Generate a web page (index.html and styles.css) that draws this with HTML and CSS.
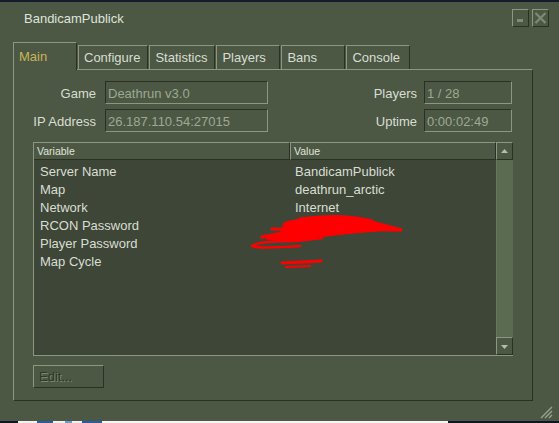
FILE: index.html
```html
<!DOCTYPE html>
<html>
<head>
<meta charset="utf-8">
<link rel="stylesheet" href="styles.css">
</head>
<body>
<div class="desk-top"></div>
<div class="window">
  <div class="titlebar">
    <span class="title">BandicamPublick</span>
    <div class="winbtns">
      <div class="winbtn"><svg width="15" height="16" viewBox="0 0 15 16"><rect x="4" y="9" width="6" height="3" fill="#7f8a76"/></svg></div>
      <div class="winbtn"><svg width="15" height="16" viewBox="0 0 15 16"><path d="M2.5 3 L12.5 13 M12.5 3 L2.5 13" stroke="#7f8a76" stroke-width="2.2"/></svg></div>
    </div>
  </div>
  <div class="tabs">
    <div class="tab active">Main</div>
    <div class="tab">Configure</div>
    <div class="tab">Statistics</div>
    <div class="tab">Players</div>
    <div class="tab">Bans</div>
    <div class="tab">Console</div>
  </div>
  <div class="panel">
    <div class="form">
      <div class="lbl">Game</div><div class="field">Deathrun v3.0</div>
      <div class="lbl lbl-r">Players</div><div class="field">1 / 28</div>
      <div class="lbl">IP Address</div><div class="field">26.187.110.54:27015</div>
      <div class="lbl lbl-r">Uptime</div><div class="field">0:00:02:49</div>
    </div>
    <div class="list">
      <div class="list-main">
        <div class="header">
          <div class="hcell c1">Variable</div>
          <div class="hcell c2">Value</div>
        </div>
        <div class="rows">
          <div class="row"><span class="c1">Server Name</span><span class="c2">BandicamPublick</span></div>
          <div class="row"><span class="c1">Map</span><span class="c2">deathrun_arctic</span></div>
          <div class="row"><span class="c1">Network</span><span class="c2">Internet</span></div>
          <div class="row"><span class="c1">RCON Password</span><span class="c2"></span></div>
          <div class="row"><span class="c1">Player Password</span><span class="c2"></span></div>
          <div class="row"><span class="c1">Map Cycle</span><span class="c2"></span></div>
        </div>
        <svg class="scribble" width="461" height="213" viewBox="0 0 461 213">
          <g transform="translate(-34,-142)" fill="none" stroke="#ff0000" stroke-linecap="round" stroke-linejoin="round">
            <path d="M284,223 C300,216 340,217 372,221 L402,229 L352,233 L318,237 L290,241 L266,239 L282,231 Z" fill="#ff0000" stroke-width="1"/>
            <path d="M300,219 Q340,213 372,221" stroke-width="3"/>
            <path d="M272,229 L401,230" stroke-width="3"/>
            <path d="M262,237 Q300,229 352,232" stroke-width="3.5"/>
            <path d="M322,238 L296,241 Q258,241 252,246 Q256,249 300,246" stroke-width="2.4"/>
            <path d="M282,263 L321,261" stroke-width="3"/>
            <path d="M286,267 L310,266" stroke-width="2.2"/>
          </g>
        </svg>
      </div>
      <div class="scrollbar">
        <div class="sb-btn"><svg width="15" height="16" viewBox="0 0 15 16"><path d="M4 10 L11 10 L7.5 6 Z" fill="#b4bcab"/></svg></div>
        <div class="sb-track"></div>
        <div class="sb-btn"><svg width="15" height="16" viewBox="0 0 15 16"><path d="M4 7 L11 7 L7.5 11 Z" fill="#b4bcab"/></svg></div>
      </div>
    </div>
    <div class="btn-edit">Edit...</div>
  </div>
  <div class="footer">
    <svg class="grip" width="13" height="13" viewBox="0 0 13 13">
      <path d="M1 12 L12 1 M5 12 L12 5 M9 12 L12 9" stroke="#9aa391" stroke-width="1.4"/>
    </svg>
  </div>
</div>
<div class="desk-bottom"></div>
</body>
</html>
```
FILE: styles.css
```css
html, body {
  margin: 0;
  padding: 0;
  background: #101827;
}
body {
  width: 559px;
  height: 423px;
  overflow: hidden;
  font-family: "Liberation Sans", Arial, sans-serif;
  font-size: 13px;
  color: #d8ded3;
}
.desk-top {
  height: 2px;
  background: #141c2b;
}
.window {
  height: 419px;
  background: #4c5844;
  display: flex;
  flex-direction: column;
}
.titlebar {
  height: 41px;
  box-sizing: border-box;
  padding: 7px 10px 0 24px;
  display: flex;
  align-items: flex-start;
  justify-content: space-between;
}
.title {
  line-height: 20px;
  color: #dfe4da;
}
.winbtns {
  display: flex;
  gap: 3px;
}
.winbtn {
  width: 17px;
  height: 18px;
  box-sizing: border-box;
  border-top: 1px solid #8c9680;
  border-left: 1px solid #8c9680;
  border-right: 1px solid #2a3124;
  border-bottom: 1px solid #2a3124;
  display: flex;
}
.tabs {
  display: flex;
  align-items: flex-end;
  gap: 1px;
  padding-left: 13px;
  height: 26px;
  position: relative;
  z-index: 1;
}
.tab {
  height: 24px;
  min-width: 64px;
  box-sizing: border-box;
  padding: 0 7px 0 5px;
  border-top: 1px solid #8c9680;
  border-left: 1px solid #8c9680;
  border-right: 1px solid #2a3124;
  line-height: 24px;
  background: #4c5844;
}
.tab.active {
  height: 28px;
  margin-bottom: -1px;
  color: #c8b55a;
  line-height: 27px;
  padding-left: 5px;
}
.panel {
  margin-left: 13px;
  width: 520px;
  height: 332px;
  box-sizing: border-box;
  border-top: 1px solid #8c9680;
  border-left: 1px solid #8c9680;
  border-right: 1px solid #2a3124;
  border-bottom: 1px solid #2a3124;
  padding: 11px 19px 12px 19px;
  display: flex;
  flex-direction: column;
}
.form {
  display: grid;
  grid-template-columns: 72px 163px 1fr 88px;
  grid-auto-rows: 23px;
  row-gap: 5px;
  padding-right: 1px;
}
.lbl {
  text-align: right;
  padding-right: 9px;
  line-height: 25px;
  color: #d8ded3;
}
.lbl-r {
  padding-right: 7px;
}
.field {
  box-sizing: border-box;
  border-top: 1px solid #2a3124;
  border-left: 1px solid #2a3124;
  border-right: 1px solid #8c9680;
  border-bottom: 1px solid #8c9680;
  padding-left: 2px;
  padding-top: 1px;
  line-height: 21px;
  color: #9ea893;
}
.list {
  margin-top: 10px;
  height: 214px;
  display: flex;
}
.list-main {
  flex: 1;
  position: relative;
  background: #3e4637;
  border-left: 1px solid #8c9680;
  border-bottom: 1px solid #8c9680;
  display: flex;
  flex-direction: column;
}
.header {
  display: flex;
  height: 18px;
  background: #4c5844;
}
.hcell {
  box-sizing: border-box;
  border-top: 1px solid #8c9680;
  border-left: 1px solid #8c9680;
  border-right: 1px solid #2a3124;
  border-bottom: 1px solid #2a3124;
  font-size: 10.5px;
  line-height: 16px;
  padding-left: 3px;
  color: #e0e4dc;
}
.hcell.c1 {
  width: 256px;
  border-left: none;
}
.hcell.c2 {
  flex: 1;
}
.rows {
  padding-top: 3px;
}
.row {
  display: flex;
  height: 18px;
  line-height: 18px;
}
.row .c1 {
  width: 256px;
  padding-left: 6px;
  box-sizing: border-box;
}
.row .c2 {
  padding-left: 5px;
}
.scribble {
  position: absolute;
  left: 0;
  top: 0;
  pointer-events: none;
}
.scrollbar {
  width: 17px;
  display: flex;
  flex-direction: column;
  border-bottom: 1px solid #8c9680;
}
.sb-btn {
  height: 18px;
  box-sizing: border-box;
  border-top: 1px solid #8c9680;
  border-left: 1px solid #8c9680;
  border-right: 1px solid #2a3124;
  border-bottom: 1px solid #2a3124;
  background: #4c5844;
  display: flex;
}
.sb-track {
  flex: 1;
  background: #5b6b51;
  border-left: 1px solid #66755b;
}
.btn-edit {
  margin-top: 9px;
  width: 71px;
  height: 23px;
  box-sizing: border-box;
  border-top: 1px solid #8c9680;
  border-left: 1px solid #8c9680;
  border-right: 1px solid #2a3124;
  border-bottom: 1px solid #2a3124;
  padding-left: 5px;
  line-height: 22px;
  color: #2f3727;
  text-shadow: 1px 1px 0 #7a8670;
}
.footer {
  flex: 1;
  display: flex;
  justify-content: flex-end;
  align-items: flex-end;
  padding: 0 6px 2px 0;
}
.desk-bottom {
  height: 2px;
  background: linear-gradient(to right,
    #0d1526 0, #0d1526 18px,
    #f2f2f2 18px, #f2f2f2 37px,
    #2b5d9a 37px, #2b5d9a 53px,
    #f2f2f2 53px, #f2f2f2 65px,
    #6b9acb 65px, #6b9acb 72px,
    #f2f2f2 72px, #f2f2f2 82px,
    #2b5d9a 82px, #2b5d9a 102px,
    #f4f4f4 102px, #f4f4f4 448px,
    #0d1526 448px, #0d1526 559px);
}
```
